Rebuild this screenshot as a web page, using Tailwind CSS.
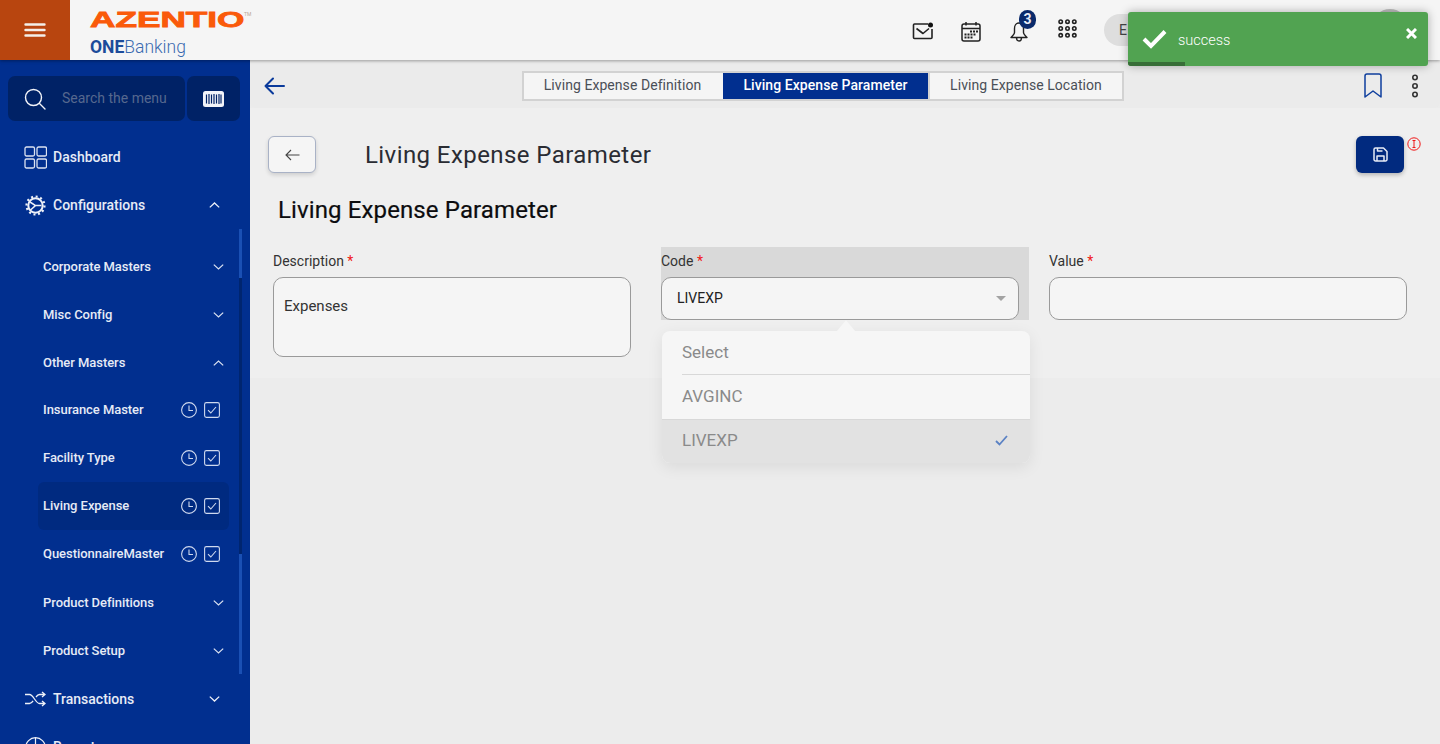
<!DOCTYPE html>
<html lang="en">
<head>
<meta charset="utf-8">
<script src="https://cdn.jsdelivr.net/npm/@tailwindcss/browser@4"></script>
<title>Living Expense Parameter</title>
</head>
<body class="font-['Roboto',sans-serif]">
<div class="relative w-[1440px] h-[744px] overflow-hidden bg-[#ececec] flex flex-col">

  <!-- header -->
  <header class="relative z-10 h-[60px] shrink-0 flex items-center bg-[#f5f5f5] shadow-[0_1px_3px_rgba(0,0,0,0.35)]">
    <div class="w-[70px] h-full bg-[#b8450f] flex items-center justify-center">
      <svg width="22" height="16" viewBox="0 0 22 16" fill="none" stroke="#f4efe9" stroke-width="2.4" stroke-linecap="round"><path d="M1.500 2.500h19M1.500 8h19M1.500 13.500h19"/></svg>
    </div>
    <div class="relative ml-[20px] w-[165px] h-full flex flex-col pt-[8px]">
      <div class="h-[23px] flex items-start">
        <span class="font-['Liberation_Sans',sans-serif] text-[22px] leading-[24px] font-bold text-[#fa5a0a] [-webkit-text-stroke:0.8px_#fa5a0a] origin-left scale-x-[1.6]">AZENTIO</span>
      </div>
      <span class="absolute left-[154px] top-[11px] text-[5px] leading-[6px] text-[#b9a79a]">TM</span>
      <div class="text-[17.5px] leading-[20px] mt-[6px] text-[#3a6ab0]"><span class="font-bold text-[#1c4b9a]">ONE</span><span class="font-light">Banking</span></div>
    </div>
    <div class="flex-1"></div>

    <!-- mail -->
    <svg class="absolute left-[912px] top-[21px]" width="23" height="20" viewBox="0 0 23 20" fill="none" stroke="#222" stroke-width="1.600" stroke-linejoin="round"><path d="M16 3H2.500A1 1 0 0 0 1.500 4v12.500a1 1 0 0 0 1 1h16.500a1 1 0 0 0 1-1V8"/><path d="M4.500 7.500l6.500 5 6-5"/><circle cx="18.500" cy="4" r="2.500" fill="#111" stroke="none"/></svg>
    <!-- calendar -->
    <svg class="absolute left-[960px] top-[21px]" width="22" height="21" viewBox="0 0 22 21" fill="none" stroke="#222" stroke-width="1.500"><rect x="2" y="3" width="18" height="17" rx="2"/><path d="M2 7.500h18M6 1v3.500M16 1v3.500"/><g fill="#222" stroke="none"><rect x="10" y="9.500" width="2" height="2"/><rect x="13" y="9.500" width="2" height="2"/><rect x="16" y="9.500" width="2" height="2"/><rect x="4.500" y="12.500" width="2" height="2"/><rect x="7.500" y="12.500" width="2" height="2"/><rect x="10.500" y="12.500" width="2" height="2"/><rect x="13.500" y="12.500" width="2" height="2"/><rect x="4.500" y="15.500" width="2" height="2"/><rect x="7.500" y="15.500" width="2" height="2"/><rect x="10.500" y="15.500" width="2" height="2"/></g></svg>
    <!-- bell -->
    <svg class="absolute left-[1010px] top-[22px]" width="18" height="20" viewBox="0 0 18 20" fill="none" stroke="#222" stroke-width="1.400" stroke-linejoin="round"><path d="M9 1C6 1 4.500 3.500 4.500 6.500v4C4.500 12 3 13.500 1 15.500h16c-2-2-3.500-3.500-3.500-5v-4C13.500 3.500 12 1 9 1z"/><path d="M6.500 15.500c0 2 1 3.500 2.500 3.500s2.500-1.500 2.500-3.500"/></svg>
    <div class="absolute left-[1019px] top-[10px] w-[17px] h-[19px] rounded-full bg-[#0a2a6b] text-[#e6ebf6] text-[14px] font-bold flex items-center justify-center">3</div>
    <!-- apps -->
    <svg class="absolute left-[1058px] top-[19px]" width="19" height="19" viewBox="0 0 19 19" fill="none" stroke="#222" stroke-width="1.600"><circle cx="2.700" cy="2.700" r="1.700"/><circle cx="9.500" cy="2.700" r="1.700"/><circle cx="16.300" cy="2.700" r="1.700"/><circle cx="2.700" cy="9.500" r="1.700"/><circle cx="9.500" cy="9.500" r="1.700"/><circle cx="16.300" cy="9.500" r="1.700"/><circle cx="2.700" cy="16.300" r="1.700"/><circle cx="9.500" cy="16.300" r="1.700"/><circle cx="16.300" cy="16.300" r="1.700"/></svg>
    <!-- language pill, mostly under the toast -->
    <div class="absolute left-[1104px] top-[14px] w-[80px] h-[32px] rounded-full bg-[#dedede] text-[#444] text-[14px] leading-[32px] pl-[15px]">E</div>
    <div class="absolute left-[1372px] top-[9px] w-[36px] h-[36px] rounded-full bg-[#bdbdbd]"></div>
  </header>

  <div class="flex-1 flex min-h-0">
    <!-- sidebar -->
    <aside class="relative w-[250px] shrink-0 bg-[#012f8f] text-[#e6ebf6] overflow-hidden">
      <div class="flex gap-[2px] pl-[8px] pt-[16px]">
        <div class="w-[177px] h-[45px] rounded-[7px] bg-[#002266] flex items-center pl-[16px]">
          <svg width="22" height="22" viewBox="0 0 22 22" fill="none" stroke="#f2f4f9" stroke-width="1.400" stroke-linecap="round"><circle cx="9.500" cy="9.500" r="8"/><path d="M15.500 15.500l5.500 5.500"/></svg>
          <span class="ml-[16px] text-[14px] text-[#56688e]">Search the menu</span>
        </div>
        <div class="w-[53px] h-[45px] rounded-[7px] bg-[#002266] flex items-center justify-center">
          <svg width="21" height="16" viewBox="0 0 21 16"><rect width="21" height="16" rx="2.500" fill="#f2f4f9"/><path d="M3.500 3.500v9M6 3v10M8.500 3.500v9M11 3v10M13.500 3.500v9M16 3v10M18 3.500v9" stroke="#002266" stroke-width="1.200"/></svg>
        </div>
      </div>

      <div class="pt-[12px]">
        <div class="h-[48px] flex items-center pl-[24px]">
          <svg width="23" height="23" viewBox="0 0 23 23" fill="none" stroke="#dbe2f1" stroke-width="1.300"><rect x="1" y="1" width="9.500" height="9" rx="1.500"/><rect x="13" y="1" width="9.500" height="9" rx="1.500"/><rect x="1" y="13" width="9.500" height="9" rx="1.500"/><rect x="13" y="13" width="9.500" height="9" rx="1.500"/></svg>
          <span class="ml-[6px] text-[14px] font-medium">Dashboard</span>
        </div>
        <div class="h-[48px] flex items-center pl-[25px] pr-[30px]">
          <svg width="21" height="21" viewBox="0 0 21 21" fill="none" stroke="#eef1f8"><circle cx="10.500" cy="10.500" r="7.200" stroke-width="2"/><circle cx="10.500" cy="10.500" r="9" stroke-width="2.200" stroke-dasharray="2 2.700"/><path d="M5 7l5.500 3.500L5.500 15M10.500 10.500h6" stroke-width="1.500"/></svg>
          <span class="ml-[7px] text-[14px] font-medium flex-1">Configurations</span>
          <svg width="11" height="6" viewBox="0 0 11 6" fill="none" stroke="#eef1f8" stroke-width="1.300"><path d="M.8 5.400L5.500 1l4.700 4.400"/></svg>
        </div>

        <div class="pt-[14px] text-[13px] font-medium leading-[16px] tracking-[-0.05px]">
          <div class="h-[48px] flex items-center pl-[43px] pr-[26px]"><span class="flex-1">Corporate Masters</span><svg width="11" height="6" viewBox="0 0 11 6" fill="none" stroke="#dbe2f1" stroke-width="1.200"><path d="M.8.600L5.500 5l4.700-4.400"/></svg></div>
          <div class="h-[48px] flex items-center pl-[43px] pr-[26px]"><span class="flex-1">Misc Config</span><svg width="11" height="6" viewBox="0 0 11 6" fill="none" stroke="#dbe2f1" stroke-width="1.200"><path d="M.8.600L5.500 5l4.700-4.400"/></svg></div>
          <div class="h-[48px] flex items-center pl-[43px] pr-[26px]"><span class="flex-1">Other Masters</span><svg width="11" height="6" viewBox="0 0 11 6" fill="none" stroke="#dbe2f1" stroke-width="1.200"><path d="M.8 5.400L5.500 1l4.700 4.400"/></svg></div>

          <div class="h-[48px] -mt-[1px] flex items-center pl-[43px] pr-[30px]"><span class="flex-1">Insurance Master</span>
            <svg width="16" height="16" viewBox="0 0 16 16" fill="none" stroke="#cfd9ee" stroke-width="1.100"><circle cx="8" cy="8" r="7.400"/><path d="M8 3.500V8.500h4"/></svg>
            <svg class="ml-[7px]" width="16" height="16" viewBox="0 0 16 16" fill="none" stroke="#cfd9ee" stroke-width="1.100"><rect x=".6" y=".6" width="14.800" height="14.800" rx="1.800"/><path d="M4 8.200l2.800 2.800 5.200-6"/></svg>
          </div>
          <div class="h-[48px] flex items-center pl-[43px] pr-[30px]"><span class="flex-1">Facility Type</span>
            <svg width="16" height="16" viewBox="0 0 16 16" fill="none" stroke="#cfd9ee" stroke-width="1.100"><circle cx="8" cy="8" r="7.400"/><path d="M8 3.500V8.500h4"/></svg>
            <svg class="ml-[7px]" width="16" height="16" viewBox="0 0 16 16" fill="none" stroke="#cfd9ee" stroke-width="1.100"><rect x=".6" y=".6" width="14.800" height="14.800" rx="1.800"/><path d="M4 8.200l2.800 2.800 5.200-6"/></svg>
          </div>
          <div class="h-[48px] ml-[38px] mr-[21px] rounded-[6px] bg-[#002a80] flex items-center pl-[5px] pr-[9px]"><span class="flex-1">Living Expense</span>
            <svg width="16" height="16" viewBox="0 0 16 16" fill="none" stroke="#cfd9ee" stroke-width="1.100"><circle cx="8" cy="8" r="7.400"/><path d="M8 3.500V8.500h4"/></svg>
            <svg class="ml-[7px]" width="16" height="16" viewBox="0 0 16 16" fill="none" stroke="#cfd9ee" stroke-width="1.100"><rect x=".6" y=".6" width="14.800" height="14.800" rx="1.800"/><path d="M4 8.200l2.800 2.800 5.200-6"/></svg>
          </div>
          <div class="h-[48px] flex items-center pl-[43px] pr-[30px]"><span class="flex-1">QuestionnaireMaster</span>
            <svg width="16" height="16" viewBox="0 0 16 16" fill="none" stroke="#cfd9ee" stroke-width="1.100"><circle cx="8" cy="8" r="7.400"/><path d="M8 3.500V8.500h4"/></svg>
            <svg class="ml-[7px]" width="16" height="16" viewBox="0 0 16 16" fill="none" stroke="#cfd9ee" stroke-width="1.100"><rect x=".6" y=".6" width="14.800" height="14.800" rx="1.800"/><path d="M4 8.200l2.800 2.800 5.200-6"/></svg>
          </div>
          <div class="h-[48px] mt-[1px] flex items-center pl-[43px] pr-[26px]"><span class="flex-1">Product Definitions</span><svg width="11" height="6" viewBox="0 0 11 6" fill="none" stroke="#dbe2f1" stroke-width="1.200"><path d="M.8.600L5.500 5l4.700-4.400"/></svg></div>
          <div class="h-[48px] flex items-center pl-[43px] pr-[26px]"><span class="flex-1">Product Setup</span><svg width="11" height="6" viewBox="0 0 11 6" fill="none" stroke="#dbe2f1" stroke-width="1.200"><path d="M.8.600L5.500 5l4.700-4.400"/></svg></div>
        </div>

        <div class="h-[48px] flex items-center pl-[25px] pr-[30px]">
          <svg width="21" height="16" viewBox="0 0 21 16" fill="none" stroke="#eef1f8" stroke-width="1.300"><path d="M0 3.500h4.500c4 0 6 9 10 9H20M0 12.500h4.500c1.500 0 2.600-1.200 3.600-2.700M11 6c1-1.400 2-2.500 3.500-2.500H20M17 1l3 2.500-3 2.500M17 10l3 2.500-3 2.500"/></svg>
          <span class="ml-[7px] text-[14px] font-medium flex-1">Transactions</span>
          <svg width="11" height="6" viewBox="0 0 11 6" fill="none" stroke="#eef1f8" stroke-width="1.300"><path d="M.8.600L5.500 5l4.700-4.400"/></svg>
        </div>
        <div class="h-[48px] flex items-center pl-[25px] pr-[30px]">
          <svg width="21" height="21" viewBox="0 0 21 21" fill="none" stroke="#eef1f8" stroke-width="1.200"><circle cx="10.500" cy="10.500" r="9.800"/><path d="M10.500.700v9.800h9.800M10.500 10.500v10"/></svg>
          <span class="ml-[7px] text-[14px] font-medium flex-1">Reports</span>
        </div>
      </div>

      <!-- scrollbar -->
      <div class="absolute left-[239px] top-[169px] w-[3px] h-[49px] bg-[#1a50b4]"></div>
      <div class="absolute left-[239px] top-[218px] w-[3px] h-[276px] bg-[#00256f]"></div>
      <div class="absolute left-[239px] top-[494px] w-[3px] h-[120px] bg-[#1a50b4]"></div>
    </aside>

    <!-- main -->
    <main class="relative flex-1 min-w-0 flex flex-col">
      <div class="h-[48px] shrink-0 bg-[#ebebeb] rounded-b-[6px] flex items-center pt-[3px] pl-[14px] pr-[21px]">
        <svg width="21" height="18" viewBox="0 0 21 18" fill="none" stroke="#0a3a9b" stroke-width="2" stroke-linecap="round" stroke-linejoin="round"><path d="M1.500 9H20M9 1.500L1.500 9 9 16.500"/></svg>
        <div class="ml-[237px] flex h-[30px] border-[2px] border-[#d2d2d2] bg-[#f5f5f5] text-[14px] tracking-[0.06px] text-[#4a4f57]">
          <div class="w-[199px] flex items-center justify-center pr-[2px]">Living Expense Definition</div>
          <div class="w-[205px] flex items-center justify-center bg-[#012f8f] text-white font-medium">Living Expense Parameter</div>
          <div class="w-[194px] flex items-center justify-center border-l-[2px] border-[#d2d2d2]">Living Expense Location</div>
        </div>
        <div class="flex-1"></div>
        <svg width="18" height="25" viewBox="0 0 18 25" fill="none" stroke="#0f3f9e" stroke-width="1.500" stroke-linejoin="round"><path d="M1 3a2 2 0 0 1 2-2h12a2 2 0 0 1 2 2v21l-8-6-8 6z"/></svg>
        <svg class="ml-[29px]" width="8" height="24" viewBox="0 0 8 24" fill="none" stroke="#333" stroke-width="1.600"><circle cx="4" cy="3.500" r="2.200"/><circle cx="4" cy="12" r="2.200"/><circle cx="4" cy="20.500" r="2.200"/></svg>
      </div>

      <div class="h-[270px] shrink-0 bg-[#efefef]">
        <div class="flex items-start pt-[28px] pl-[18px] pr-[36px]">
          <div class="w-[48px] h-[37px] rounded-[6px] border border-[#a9b2c6] bg-[#f5f5f5] shadow-[0_2px_4px_rgba(0,0,0,0.14)] flex items-center justify-center">
            <svg width="15" height="12" viewBox="0 0 15 12" fill="none" stroke="#444" stroke-width="1.100"><path d="M14.500 6H1M6 1L1 6l5 5"/></svg>
          </div>
          <h1 class="ml-[49px] pt-[1px] text-[24px] leading-[37px] font-normal tracking-[0.42px] text-[#2a2c33]">Living Expense Parameter</h1>
          <div class="flex-1"></div>
          <div class="relative w-[48px] h-[37px] rounded-[6px] bg-[#012a7f] shadow-[0_2px_4px_rgba(0,0,0,0.25)] flex items-center justify-center">
            <svg width="15" height="15" viewBox="0 0 15 15" fill="none" stroke="#e6ebf6" stroke-width="1.500" stroke-linejoin="round"><path d="M1 2.500A1.500 1.500 0 0 1 2.500 1h8L14 4.500v8a1.500 1.500 0 0 1-1.500 1.500h-10A1.500 1.500 0 0 1 1 12.500z"/><path d="M4 14V9h7v5M4.500 1v3h5"/></svg>
            <svg class="absolute left-[51px] top-[1px]" width="14" height="14" viewBox="0 0 14 14" fill="none" stroke="#f01818" stroke-width="1"><circle cx="7" cy="7" r="6.200"/><path d="M5.500 3.500h3M5.500 10.500h3M7 3.500v7"/></svg>
          </div>
        </div>

        <h2 class="ml-[28px] mt-[20px] text-[24px] leading-[32px] font-normal tracking-[0.12px] text-[#0c0c0e] [-webkit-text-stroke:0.2px_#0c0c0e]">Living Expense Parameter</h2>

        <div class="flex pl-[23px] pt-[21px] gap-[30px]">
          <div class="w-[358px]">
            <div class="h-[30px] text-[14px] leading-[28px] text-[#333]">Description <span class="text-[#f01818]">*</span></div>
            <div class="h-[80px] rounded-[10px] border border-[#9a9a9a] bg-[#f5f5f5] px-[10px] py-[18px] text-[15px] leading-[20px] text-[#333]">Expenses</div>
          </div>
          <div class="w-[358px] relative">
            <div class="absolute top-0 left-0 w-[368px] h-[73px] bg-[#d9d9d9]"></div>
            <div class="relative h-[30px] text-[14px] leading-[28px] text-[#333]">Code <span class="text-[#f01818]">*</span></div>
            <div class="relative h-[43px] rounded-[10px] border border-[#9a9a9a] bg-[#f5f5f5] pl-[15px] pr-[12px] flex items-center text-[14px] text-[#222]">
              <span class="flex-1">LIVEXP</span>
              <svg width="10" height="5" viewBox="0 0 10 5"><path d="M0 0h10L5 5z" fill="#a3a3a3"/></svg>
            </div>
            <!-- dropdown -->
            <div class="absolute z-10 left-[1px] top-[84px] w-[368px] h-[132px] rounded-[8px] bg-[#f6f6f6] shadow-[0_4px_16px_rgba(0,0,0,0.08)] text-[17px] text-[#8a8a8a]">
              <div class="absolute left-[175px] -top-[11px] w-0 h-0 border-x-[9px] border-x-transparent border-b-[11px] border-b-[#f6f6f6]"></div>
              <div class="h-[44px] ml-[20px] flex items-center border-b border-[#d8d8d8]">Select</div>
              <div class="h-[44px] ml-[20px] flex items-center">AVGINC</div>
              <div class="h-[44px] bg-[#e2e2e2] rounded-b-[8px] border-t border-[#d8d8d8] flex items-center pb-[2px] pl-[20px] pr-[22px]">
                <span class="flex-1">LIVEXP</span>
                <svg width="13" height="11" viewBox="0 0 13 11" fill="none" stroke="#5b82c4" stroke-width="1.800"><path d="M1 6l3.500 3.500L12 1"/></svg>
              </div>
            </div>
          </div>
          <div class="w-[358px]">
            <div class="h-[30px] text-[14px] leading-[28px] text-[#333]">Value <span class="text-[#f01818]">*</span></div>
            <div class="h-[43px] rounded-[10px] border border-[#9a9a9a] bg-[#f5f5f5]"></div>
          </div>
        </div>
      </div>
    </main>
  </div>

  <!-- toast -->
  <div class="absolute z-20 left-[1128px] top-[12px] w-[300px] h-[54px] rounded-[3px] bg-[#51a351] shadow-[0_0_10px_rgba(0,0,0,0.3)] overflow-hidden">
    <svg class="absolute left-[14px] top-[17px]" width="25" height="20" viewBox="0 0 25 20" fill="none" stroke="#fff" stroke-width="4"><path d="M2 10l7 7L23 2.500"/></svg>
    <div class="absolute left-[50px] top-[18px] text-[14.5px] leading-[22px] font-light text-white">success</div>
    <svg class="absolute right-[11px] top-[16px]" width="11" height="11" viewBox="0 0 11 11" fill="none" stroke="#fff" stroke-width="3"><path d="M1 1l9 9M10 1l-9 9"/></svg>
    <div class="absolute left-0 bottom-0 w-[57px] h-[4px] bg-[#386e38]"></div>
  </div>
</div>
</body>
</html>
